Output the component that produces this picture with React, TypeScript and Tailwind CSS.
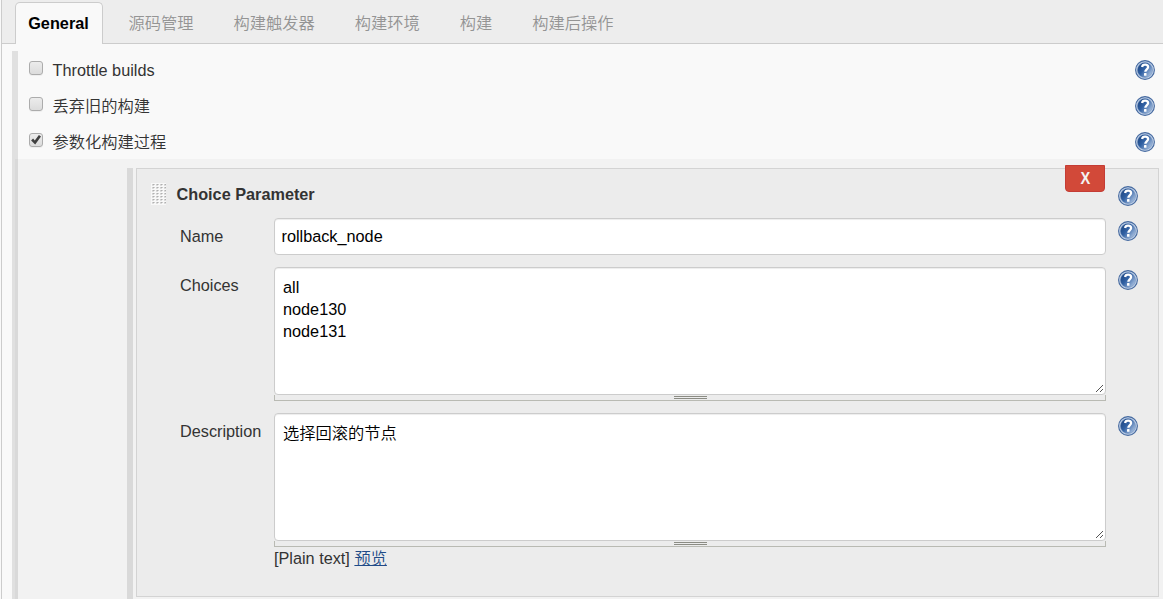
import React from 'react';

const tabs = ['源码管理', '构建触发器', '构建环境', '构建', '构建后操作'];

function Help({ className = '' }: { className?: string }) {
  return (
    <button type="button" aria-label="Help" className={`block size-5 shrink-0 ${className}`}>
      <svg viewBox="0 0 20 20" className="block size-5">
        <defs>
          <linearGradient id="helpFill" x1="0.1" y1="0.2" x2="0.9" y2="0.8">
            <stop offset="0" stopColor="#204a87" />
            <stop offset="0.4" stopColor="#3060a3" />
            <stop offset="1" stopColor="#a3bbdc" />
          </linearGradient>
        </defs>
        <circle cx="10" cy="10" r="9.4" fill="#c3d3e9" stroke="#45699f" strokeWidth="1.1" />
        <circle cx="10" cy="10" r="7.6" fill="url(#helpFill)" stroke="#6d8cba" strokeWidth="0.5" />
        <path
          d="M7.1 7C7.3 5.2 8.6 4.6 10.1 4.6c1.8 0 3 .8 3 2.4 0 2.2-2.8 2.4-2.8 4.8"
          fill="none"
          stroke="#fff"
          strokeWidth="2.3"
        />
        <rect x="9" y="13" width="2.5" height="2.7" rx="0.5" fill="#fff" />
      </svg>
    </button>
  );
}

function Option({ label, checked = false }: { label: string; checked?: boolean }) {
  return (
    <div className="flex h-9 items-start pr-2 pl-[11px]">
      <span
        role="checkbox"
        aria-checked={checked}
        aria-label={label}
        className="mt-[10px] block size-[14px] rounded-[3px] border border-[#acacac] bg-linear-to-b from-[#ececec] to-[#dcdcdc] shadow-[0_1px_0_#eeeeee]"
      >
        {checked && (
          <svg viewBox="0 0 12 12" className="block size-3">
            <path d="M1.1 6.5 3.1 4.6 4.8 6.4 8.9 0.9 11 2.4 5.2 10.4Z" fill="#404040" />
          </svg>
        )}
      </span>
      <span className="mt-2 ml-[9.5px] leading-[22px] font-[350]">{label}</span>
      <Help className="mt-[9px] ml-auto" />
    </div>
  );
}

function Area({ label, value }: { label: string; value: string }) {
  return (
    <div>
      <div className="relative h-32">
        <textarea
          aria-label={label}
          defaultValue={value}
          spellCheck={false}
          className="block h-32 w-full resize-none overflow-hidden rounded-[4px] border border-[#cccccc] bg-white px-2 pt-2 leading-[22px] font-[350] text-black shadow-[inset_0_1px_1px_rgba(0,0,0,0.075)] outline-none"
        />
        <svg viewBox="0 0 7 7" shapeRendering="crispEdges" className="absolute right-[3px] bottom-[3px] size-[7px] fill-[#555555]">
          {[0, 1, 2, 3, 4, 5, 6].map((i) => (
            <rect key={i} x={i} y={6 - i} width="1" height="1" />
          ))}
          {[4, 5, 6].map((i) => (
            <rect key={i} x={i} y={10 - i} width="1" height="1" />
          ))}
        </svg>
      </div>
      <div className="flex h-[6px] justify-center border-x border-b border-[#b9bab3] pt-px">
        <div className="h-[3px] w-[33px] border-y border-[#8b8c84]" />
      </div>
    </div>
  );
}

function Field({ label, className, children }: { label: string; className: string; children: React.ReactNode }) {
  return (
    <div className={`flex items-start ${className}`}>
      <div className="w-[94px] shrink-0 pt-[7px] leading-[22px]">{label}</div>
      <div className="w-[832px] shrink-0">{children}</div>
      <Help className="mt-[3px] ml-3" />
    </div>
  );
}

export default function App() {
  return (
    <div className="flex h-[599px] w-[1163px] overflow-hidden bg-[#f9f9f9] pl-px font-['Liberation_Sans','Noto_Sans_CJK_SC',sans-serif] text-[16.25px] text-[#333333]">
      <div className="flex min-w-0 flex-1 flex-col border-l border-[#cccccc]">
        <nav className="flex h-11 shrink-0 items-end border-b border-[#cccccc] bg-[#ededed] pl-[13px] text-[#999999]">
          <div className="-mb-px h-[42px] w-[88px] rounded-t-[5px] border border-b-0 border-[#cccccc] bg-[#f9f9f9] pt-[9px] pr-px text-center leading-[22px] font-bold text-black">
            General
          </div>
          <div className="ml-[25.5px] flex h-[42px] gap-10 pt-[11px] leading-[22px] font-[350] text-[#949494]">
            {tabs.map((tab) => (
              <span key={tab}>{tab}</span>
            ))}
          </div>
        </nav>
        <main className="flex min-h-0 flex-1 pt-[7px] pl-[10px]">
          <div className="flex w-[6px] shrink-0 flex-col bg-[#e0e0e0]">
            <div className="mt-[108px] ml-[3px] flex-1 bg-[#d9d9d9]" />
          </div>
          <div className="flex min-w-0 flex-1 flex-col">
            <div className="h-[108px] shrink-0">
              <Option label="Throttle builds" />
              <Option label="丢弃旧的构建" />
              <Option label="参数化构建过程" checked />
            </div>
            <div className="flex flex-1 bg-[#f2f2f2] pt-[9px] pl-[109px]">
              <div className="w-[6px] shrink-0 bg-[#d9d9d9]" />
              <section className="relative ml-[3px] h-[429px] w-[1023px] border border-[#d3d3d3] bg-[#ececec]">
                <button
                  type="button"
                  className="absolute -top-1 right-[53px] h-[27px] w-10 rounded-b-[4px] border border-[#c43c35] bg-[#d24939] text-center leading-[25px] font-bold text-[#f3f3f3]"
                >
                  <span className="inline-block scale-x-90">X</span>
                </button>
                <div className="flex h-[49px] items-start pl-[14px]">
                  <svg viewBox="0 0 15 22" shapeRendering="crispEdges" className="mt-[14px] h-[22px] w-[15px]">
                    <defs>
                      <pattern id="grip" width="4" height="3" patternUnits="userSpaceOnUse">
                        <rect width="4" height="3" fill="#f8f8f8" />
                        <rect x="1" y="1" width="3" height="1" fill="#cfcfcf" />
                        <rect x="2" y="1" width="1" height="1" fill="#b0b0b0" />
                        <rect x="1" y="2" width="2" height="1" fill="#dcdcdc" />
                      </pattern>
                    </defs>
                    <rect width="15" height="22" fill="url(#grip)" />
                  </svg>
                  <h2 className="mt-[14px] ml-[10.5px] leading-[22px] font-bold">Choice Parameter</h2>
                  <Help className="mt-[17px] mr-5 ml-auto" />
                </div>
                <div className="pl-[43px]">
                  <Field label="Name" className="h-[49px]">
                    <input
                      aria-label="Name"
                      defaultValue="rollback_node"
                      spellCheck={false}
                      className="block h-[37px] w-full rounded-[4px] border border-[#cccccc] bg-white px-[6.5px] text-black shadow-[inset_0_1px_1px_rgba(0,0,0,0.075)] outline-none"
                    />
                  </Field>
                  <Field label="Choices" className="h-[146px]">
                    <Area label="Choices" value={'all\nnode130\nnode131'} />
                  </Field>
                  <Field label="Description" className="">
                    <Area label="Description" value="选择回滚的节点" />
                    <div className="leading-[22px]">
                      [Plain text] <a className="font-[350] text-[#204a87] underline">预览</a>
                    </div>
                  </Field>
                </div>
              </section>
            </div>
          </div>
        </main>
      </div>
    </div>
  );
}
